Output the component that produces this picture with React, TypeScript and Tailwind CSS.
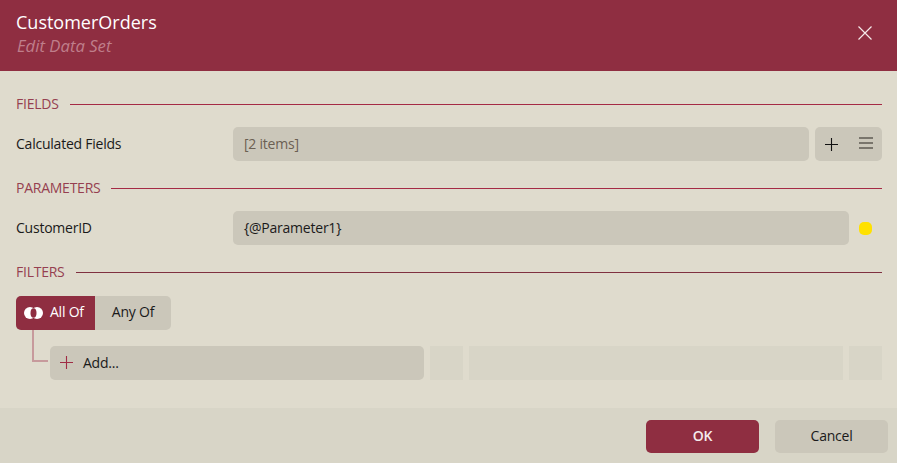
import React from 'react';

function SectionTitle({ title, line = 'bg-[#a52a45]' }: { title: string; line?: string }) {
  return (
    <div className="flex h-[24px] items-center gap-[11px]">
      <span className="text-[14px] leading-[24px] tracking-[-0.25px] text-[#963f50]">{title}</span>
      <div className={`h-px flex-1 ${line}`} />
    </div>
  );
}

function Row({ label, children }: { label: string; children: React.ReactNode }) {
  return (
    <div className="flex h-[34px] items-center">
      <span className="w-[217px] shrink-0 pb-[2px] text-[#1a1a1a]">{label}</span>
      {children}
    </div>
  );
}

export default function App() {
  return (
    <div
      className="flex h-[463px] w-[897px] flex-col overflow-hidden bg-[#dfdbcd] text-[14px] tracking-[-0.23px]"
      style={{ fontFamily: '"Open Sans", sans-serif' }}
    >
      {/* Header */}
      <div className="flex h-[71px] shrink-0 items-center justify-between bg-[#8f2e41] pb-[5px] pl-[16px] pr-[25px]">
        <div className="mt-[1px]">
          <div className="text-[18px] leading-[24px] tracking-normal text-white">CustomerOrders</div>
          <div className="mt-[1px] pl-[1px] text-[16.7px] italic leading-[22px] tracking-normal text-[#bf7e8b]">Edit Data Set</div>
        </div>
        <svg width="14" height="14" viewBox="0 0 14 14" className="text-[#f5e9e9]">
          <path d="M0.5 0.5L13.5 13.5M13.5 0.5L0.5 13.5" stroke="currentColor" strokeWidth="1.2" fill="none" />
        </svg>
      </div>

      {/* Body */}
      <div className="flex flex-1 flex-col pl-[16px] pr-[15px] pt-[21px]">
        <SectionTitle title="FIELDS" />
        <div className="mt-[11px]">
          <Row label="Calculated Fields">
            <div className="flex h-[34px] w-[576px] items-center rounded-[5px] bg-[#cbc7ba] px-[11px] pb-[2px] text-[#6b6053]">
              [2 items]
            </div>
            <div className="ml-[6px] flex h-[34px] w-[67px] items-center gap-[21px] rounded-[5px] bg-[#cbc7ba] pl-[10px]">
              <svg width="13" height="13" viewBox="0 0 13 13">
                <path d="M6.5 0V13M0 6.5H13" stroke="#111" strokeWidth="1.1" fill="none" />
              </svg>
              <svg width="14" height="12" viewBox="0 0 14 12" className="mb-[2px]">
                <path d="M0 1H14M0 6H14M0 11H14" stroke="#5f5b53" strokeWidth="1.4" fill="none" />
              </svg>
            </div>
          </Row>
        </div>

        <div className="mt-[15px]">
          <SectionTitle title="PARAMETERS" />
        </div>
        <div className="mt-[11px]">
          <Row label="CustomerID">
            <div className="flex h-[34px] w-[616px] items-center rounded-[5px] bg-[#cbc7ba] px-[11px] pb-[2px] text-[#1a1a1a]">
              {'{@Parameter1}'}
            </div>
            <div className="ml-[10px] h-[13px] w-[13px] rounded-[5px] bg-[#ffe100]" />
          </Row>
        </div>

        <div className="mt-[15px]">
          <SectionTitle title="FILTERS" line="bg-[#7f3040]" />
        </div>

        {/* All Of / Any Of */}
        <div className="mt-[12px] flex h-[34px] w-[155px] overflow-hidden rounded-[5px] bg-[#cbc7ba]">
          <div className="flex w-[79px] items-center gap-[7px] bg-[#8f2e41] pb-[3px] pl-[8px] text-white">
            <svg width="19" height="12" viewBox="0 0 19 12" className="mt-[3px]">
              <circle cx="6" cy="6" r="6" fill="#fff" />
              <circle cx="13" cy="6" r="6" fill="#fff" />
              <ellipse cx="9.5" cy="6" rx="3" ry="4.8" fill="#8f2e41" />
            </svg>
            <span>All Of</span>
          </div>
          <div className="flex flex-1 items-center justify-center pb-[3px] text-[#1a1a1a]">Any Of</div>
        </div>

        {/* Filter row */}
        <div className="relative mt-[16px] flex h-[34px] gap-[6px] pl-[34px]">
          <div className="absolute left-[16px] top-[-16px] h-[32px] w-[16px] border-b-2 border-l-2 border-[#c79a9c]" />
          <div className="flex w-[374px] items-center rounded-[5px] bg-[#cbc7ba] pb-[1px] pl-[10px]">
            <svg width="13" height="13" viewBox="0 0 13 13">
              <path d="M6.5 0V13M0 6.5H13" stroke="#a02c45" strokeWidth="1.1" fill="none" />
            </svg>
            <span className="ml-[10px] pb-[1px] text-[#1a1a1a]">Add...</span>
          </div>
          <div className="w-[33px] bg-[#d8d5c7]" />
          <div className="w-[374px] bg-[#d8d5c7]" />
          <div className="w-[33px] bg-[#d8d5c7]" />
        </div>
      </div>

      {/* Footer */}
      <div className="flex h-[55px] shrink-0 items-start justify-end gap-[16px] bg-[#d8d5c7] pr-[9px] pt-[12px]">
        <button className="h-[33px] w-[113px] rounded-[5px] bg-[#8f2e41] pb-[2px] font-semibold text-[#f5ecec]">OK</button>
        <button className="h-[33px] w-[113px] rounded-[5px] bg-[#cbc7ba] pb-[2px] text-[#1a1a1a]">Cancel</button>
      </div>
    </div>
  );
}
